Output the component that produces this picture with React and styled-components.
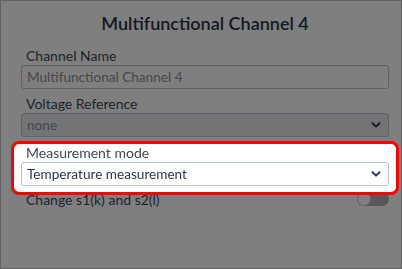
import React from 'react'
import styled, { createGlobalStyle } from 'styled-components'

const GlobalStyle = createGlobalStyle`
  html, body {
    margin: 0;
    padding: 0;
    background: #fff;
  }
  * {
    box-sizing: border-box;
  }
`

const Modal = styled.div`
  width: 402px;
  height: 269px;
  border: 1px solid #c4c4c4;
  background: #fff;
  padding: 8px 12px 0 20px;
  font-family: Lato, "Liberation Sans", sans-serif;
  color: #2d3748;
`

const Title = styled.h2`
  margin: 0 0 10px;
  text-align: center;
  font-size: 18px;
  font-weight: 600;
  line-height: 28px;
  color: #2a3445;
`

const Overlay = styled.div`
  position: fixed;
  inset: 0;
  background: rgba(0, 0, 0, 0.5);
  z-index: 1;
`

const Field = styled.div`
  display: flex;
  flex-direction: column;
  margin-bottom: ${p => p.$gap ?? 6}px;
`

const Highlight = styled(Field)`
  position: relative;
  z-index: 2;
  background: #fff;
  border: 3px solid #ff0000;
  border-radius: 8px;
  margin-left: -10px;
  margin-right: -10px;
  padding: 0 7px 6px;
`

const Label = styled.label`
  font-size: 14px;
  line-height: 18px;
  color: #3e4756;
  padding-left: 5px;
`

const Box = styled.div`
  height: 24px;
  display: flex;
  align-items: center;
  justify-content: space-between;
  padding: 0 6px 0 5px;
  border: 1px solid #b9c5d4;
  border-radius: 3px;
  font-size: 13.6px;
  color: ${p => (p.$muted ? '#8a8f96' : '#2d3748')};
  background: ${p => (p.$disabled ? '#e6e8eb' : '#fff')};
`

const Chevron = styled.svg`
  width: 12px;
  height: 12px;
  flex-shrink: 0;
`

const SwitchRow = styled.div`
  display: flex;
  align-items: center;
  justify-content: space-between;
  margin-top: -5px;
  padding-left: 5px;
  height: 18px;
`

const SwitchText = styled.span`
  font-size: 14px;
  color: #3e4756;
`

const Track = styled.div`
  width: 32px;
  height: 14px;
  border-radius: 7px;
  background: #b0b0b0;
  display: flex;
  align-items: center;
`

const Knob = styled.div`
  width: 14px;
  height: 14px;
  border-radius: 50%;
  background: #fff;
  border: 1px solid #d4d4d4;
`

function Select({ value, disabled }) {
  return (
    <Box $disabled={disabled} $muted={disabled}>
      <span>{value}</span>
      <Chevron viewBox="0 0 12 12">
        <path d="M2.5 4.2 L6 7.6 L9.5 4.2" fill="none" stroke="#2d3a4e" strokeWidth="2" strokeLinecap="round" strokeLinejoin="round" />
      </Chevron>
    </Box>
  )
}

export default function App() {
  return (
    <>
      <GlobalStyle />
      <Modal>
        <Title>Multifunctional Channel 4</Title>
        <Field>
          <Label>Channel Name</Label>
          <Box $muted>Multifunctional Channel 4</Box>
        </Field>
        <Field $gap={4}>
          <Label>Voltage Reference</Label>
          <Select value="none" disabled />
        </Field>
        <Highlight $gap={0}>
          <Label>Measurement mode</Label>
          <Select value="Temperature measurement" />
        </Highlight>
        <SwitchRow>
          <SwitchText>Change s1(k) and s2(l)</SwitchText>
          <Track>
            <Knob />
          </Track>
        </SwitchRow>
      </Modal>
      <Overlay />
    </>
  )
}
